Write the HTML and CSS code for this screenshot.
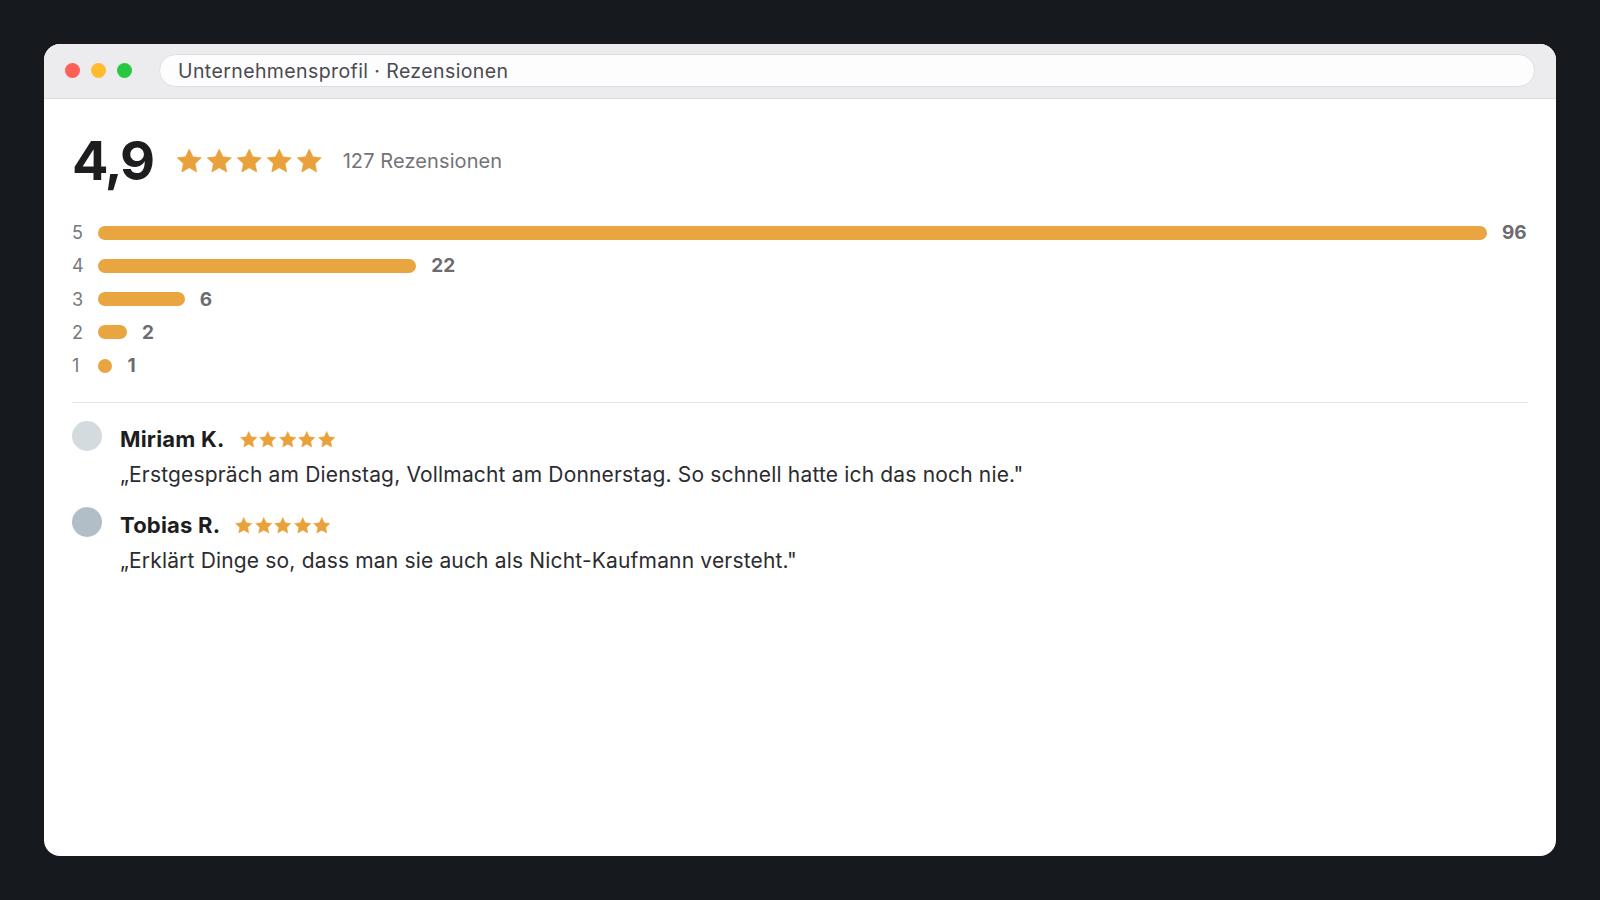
FILE: index.html
```html
<!DOCTYPE html>
<html lang="de">
<head>
<meta charset="utf-8">
<title>Unternehmensprofil · Rezensionen</title>
<link rel="stylesheet" href="styles.css">
</head>
<body>
<svg width="0" height="0" class="defs">
  <defs>
    <symbol id="star" viewBox="0 0 24 24">
      <path d="M12 1.8l3.05 6.5 7.05.85-5.2 4.85 1.37 7-6.27-3.5-6.27 3.5 1.37-7-5.2-4.85 7.05-.85z" stroke-linejoin="round"/>
    </symbol>
  </defs>
</svg>
<div class="window">
  <div class="titlebar">
    <div class="lights">
      <span class="light red"></span>
      <span class="light yellow"></span>
      <span class="light green"></span>
    </div>
    <div class="urlbar">Unternehmensprofil · Rezensionen</div>
  </div>
  <div class="content">
    <div class="summary">
      <div class="score">4,9</div>
      <div class="stars big">
        <svg><use href="#star"/></svg><svg><use href="#star"/></svg><svg><use href="#star"/></svg><svg><use href="#star"/></svg><svg><use href="#star"/></svg>
      </div>
      <div class="total">127 Rezensionen</div>
    </div>
    <div class="bars">
      <div class="row"><span class="lbl">5</span><div class="track"><div class="bar" style="--p:1"></div><span class="cnt">96</span></div></div>
      <div class="row"><span class="lbl">4</span><div class="track"><div class="bar" style="--p:0.2292"></div><span class="cnt">22</span></div></div>
      <div class="row"><span class="lbl">3</span><div class="track"><div class="bar" style="--p:0.0625"></div><span class="cnt">6</span></div></div>
      <div class="row"><span class="lbl">2</span><div class="track"><div class="bar" style="--p:0.0208"></div><span class="cnt">2</span></div></div>
      <div class="row"><span class="lbl">1</span><div class="track"><div class="bar" style="--p:0.0104"></div><span class="cnt">1</span></div></div>
    </div>
    <div class="divider"></div>
    <div class="reviews">
      <div class="review">
        <div class="avatar a1"></div>
        <div class="rbody">
          <div class="rhead">
            <span class="name">Miriam K.</span>
            <span class="stars small"><svg><use href="#star"/></svg><svg><use href="#star"/></svg><svg><use href="#star"/></svg><svg><use href="#star"/></svg><svg><use href="#star"/></svg></span>
          </div>
          <p class="quote">„Erstgespräch am Dienstag, Vollmacht am Donnerstag. So schnell hatte ich das noch nie."</p>
        </div>
      </div>
      <div class="review">
        <div class="avatar a2"></div>
        <div class="rbody">
          <div class="rhead">
            <span class="name">Tobias R.</span>
            <span class="stars small"><svg><use href="#star"/></svg><svg><use href="#star"/></svg><svg><use href="#star"/></svg><svg><use href="#star"/></svg><svg><use href="#star"/></svg></span>
          </div>
          <p class="quote">„Erklärt Dinge so, dass man sie auch als Nicht-Kaufmann versteht."</p>
        </div>
      </div>
    </div>
  </div>
</div>
</body>
</html>
```
FILE: styles.css
```css
* { box-sizing: border-box; }
html, body { margin: 0; padding: 0; }
body {
  width: 1600px;
  height: 900px;
  background: #16191d;
  font-family: Inter, "Noto Sans", "Liberation Sans", sans-serif;
  padding: 44px;
  overflow: hidden;
}
.defs { position: absolute; }
.window {
  width: 1512px;
  height: 812px;
  background: #ffffff;
  border-radius: 16px;
  overflow: hidden;
  display: flex;
  flex-direction: column;
}
.titlebar {
  height: 55px;
  background: #ececee;
  border-bottom: 1px solid #dcdce0;
  display: flex;
  align-items: center;
  padding: 0 21px 0 21px;
  gap: 27px;
  flex-shrink: 0;
}
.lights { display: flex; gap: 11px; align-items: center; margin-top: -2px; }
.light { width: 15px; height: 15px; border-radius: 50%; display: block; }
.red { background: #fe5f57; }
.yellow { background: #febc2e; }
.green { background: #28c840; }
.urlbar {
  flex: 1;
  height: 33px;
  margin-top: -1px;
  background: #fdfdfd;
  border: 1px solid #dedee2;
  border-radius: 17px;
  display: flex;
  align-items: center;
  padding-left: 18px;
  font-size: 19.5px;
  letter-spacing: 0.4px;
  color: #4a4a50;
}
.content {
  padding: 30px 28px 0 28px;
}
.summary {
  display: flex;
  align-items: center;
  height: 64px;
}
.score {
  font-size: 54px;
  font-weight: 700;
  color: #1d1d1f;
  line-height: 64px;
  letter-spacing: -2px;
}
.stars { display: flex; }
.stars svg { fill: #e9a23b; stroke: #e9a23b; }
.stars.big { margin-left: 22px; gap: 1.5px; }
.stars.big svg { width: 28.5px; height: 28.5px; stroke-width: 0.6; }
.total {
  margin-left: 19px;
  font-size: 20px;
  letter-spacing: 0.1px;
  color: #737378;
}
.bars {
  margin-top: 23px;
  display: flex;
  flex-direction: column;
}
.row {
  height: 33.25px;
  display: flex;
  align-items: center;
}
.lbl {
  width: 26px;
  font-size: 18px;
  color: #77777c;
}
.track {
  flex: 1;
  display: flex;
  align-items: center;
  gap: 15px;
}
.bar {
  height: 14px;
  border-radius: 7px;
  background: #e9a540;
  width: calc((100% - 41px) * var(--p));
  min-width: 14px;
}
.cnt {
  font-size: 19px;
  font-weight: 700;
  color: #6b6b70;
}
.divider {
  margin-top: 20px;
  height: 1px;
  background: #e6e6e8;
}
.reviews {
  margin-top: 20px;
  display: flex;
  flex-direction: column;
  gap: 19.5px;
}
.review {
  display: flex;
  gap: 18px;
}
.avatar {
  width: 30px;
  height: 30px;
  border-radius: 50%;
  margin-top: -2px;
  flex-shrink: 0;
}
.a1 { background: #d3dbdf; }
.a2 { background: #b1bec7; }
.rbody { display: flex; flex-direction: column; }
.rhead {
  height: 32px;
  display: flex;
  align-items: center;
  gap: 14px;
}
.name {
  font-size: 22px;
  font-weight: 700;
  letter-spacing: 0.2px;
  color: #1d1d1f;
}
.stars.small { gap: 0; margin-top: 1px; }
.stars.small svg { width: 19.5px; height: 19.5px; stroke-width: 0.5; }
.quote {
  margin: 6px 0 0 0;
  font-size: 21px;
  letter-spacing: 0.17px;
  line-height: 28px;
  color: #2c2c30;
}
```
